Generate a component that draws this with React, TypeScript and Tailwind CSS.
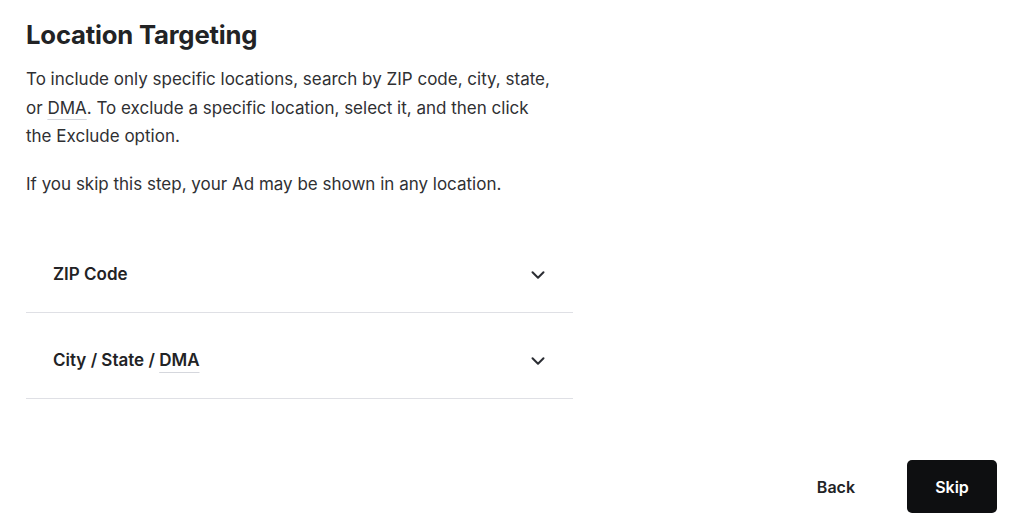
import React from 'react';
import { ChevronDown } from 'lucide-react';

const sections = ['ZIP Code', 'City / State / DMA'];

export default function App() {
  return (
    <div
      className="w-[1024px] h-[531px] bg-white text-[#222325] flex flex-col justify-between"
      style={{ fontFamily: 'Inter, "Open Sans", sans-serif' }}
    >
      <div className="pl-[26px] pt-[18px] w-[573px]">
        <h1 className="text-[25.7px] leading-[34px] font-bold tracking-[-0.2px]">Location Targeting</h1>
        <p className="mt-[13px] w-[528px] text-[17px] leading-[28.5px] text-[#2f3033]">
          To include only specific locations, search by ZIP code, city, state, or{' '}
          <span className="underline decoration-[#d5d7dd] underline-offset-[5px]">DMA</span>. To exclude a specific
          location, select it, and then click the Exclude option.
        </p>
        <p className="mt-[19px] text-[17px] leading-[28.5px] text-[#2f3033]">
          If you skip this step, your Ad may be shown in any location.
        </p>

        <div className="mt-[29px]">
          {sections.map((label) => (
            <button
              key={label}
              className="w-full h-[86px] pt-[10px] flex items-center justify-between pl-[27px] pr-[24px] border-b border-[#dfe0e5] text-left"
            >
              <span className="text-[17px] font-semibold">
                {label === 'ZIP Code' ? (
                  label
                ) : (
                  <>
                    City / State /{' '}
                    <span className="underline decoration-[#d5d7dd] underline-offset-[6px]">DMA</span>
                  </>
                )}
              </span>
              <ChevronDown className="w-[22px] h-[22px] text-[#2b2d33]" strokeWidth={2.2} />
            </button>
          ))}
        </div>
      </div>

      <div className="flex items-center justify-end gap-[52px] pr-[27px] pb-[18px]">
        <button className="text-[16px] font-semibold">Back</button>
        <button className="w-[90px] h-[53px] rounded-[5px] bg-[#0e0f11] text-white text-[16px] font-semibold">
          Skip
        </button>
      </div>
    </div>
  );
}
